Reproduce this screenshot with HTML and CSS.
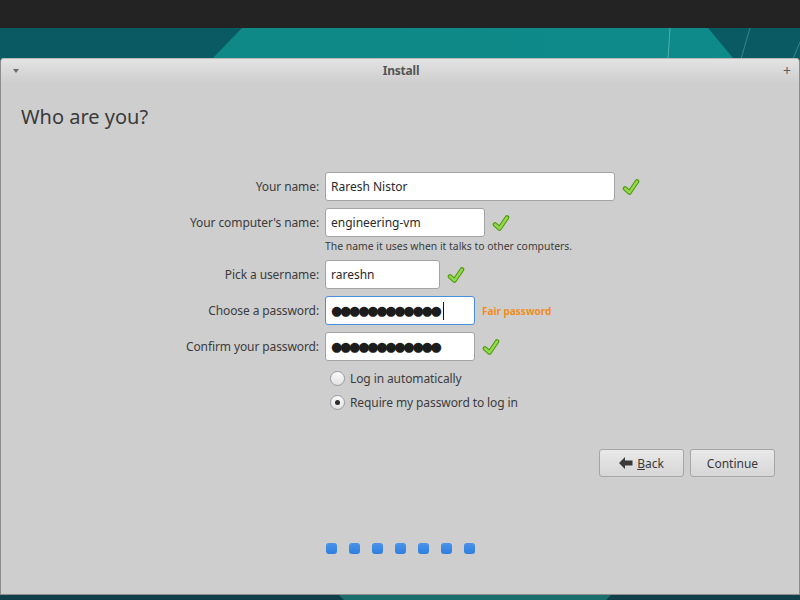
FILE: index.html
```html
<!DOCTYPE html>
<html>
<head>
<meta charset="utf-8">
<link rel="stylesheet" href="styles.css">
</head>
<body>
<div class="topbar"></div>
<div class="desktop">
  <svg class="wallpaper" width="800" height="572" viewBox="0 0 800 572">
    <rect x="0" y="0" width="800" height="572" fill="#0a5a64"/>
    <defs>
      <linearGradient id="mid" x1="0" y1="0" x2="1" y2="0">
        <stop offset="0" stop-color="#0f8987"/>
        <stop offset="1" stop-color="#0e8a8b"/>
      </linearGradient>
    </defs>
    <polygon points="242,0 708,0 733,30 213,30" fill="url(#mid)"/>
    <line x1="670" y1="0" x2="668" y2="31" stroke="#6fbcbc" stroke-width="1" opacity="0.7"/>
    <line x1="750" y1="0" x2="741" y2="31" stroke="#3f9ca0" stroke-width="1" opacity="0.7"/>
    <line x1="800" y1="14" x2="793" y2="31" stroke="#3f9ca0" stroke-width="1" opacity="0.7"/>
    <rect x="0" y="566" width="800" height="6" fill="#113f48"/>
    <polygon points="338,566 612,566 606,572 344,572" fill="#1a6e6b"/>
  </svg>
  <div class="window">
    <div class="titlebar">
      <span class="tb-menu"></span>
      <span class="tb-title">Install</span>
      <span class="tb-max">+</span>
    </div>
    <div class="content">
      <h1 class="heading">Who are you?</h1>
      <div class="form">
        <div class="label">Your name:</div>
        <div class="field">
          <div class="entry w-name">Raresh Nistor</div>
          <svg class="check" width="18" height="18" viewBox="0 0 18 18"><path d="M3 10.5 L7.5 14.5 L15 3.5" fill="none" stroke="#4f9a0a" stroke-width="4.6" stroke-linejoin="round" stroke-linecap="round"/><path d="M3 10.5 L7.5 14.5 L15 3.5" fill="none" stroke="#92d84e" stroke-width="2.4" stroke-linejoin="round" stroke-linecap="round"/></svg>
        </div>

        <div class="label">Your computer's name:</div>
        <div class="field">
          <div class="entry w-comp">engineering-vm</div>
          <svg class="check" width="18" height="18" viewBox="0 0 18 18"><path d="M3 10.5 L7.5 14.5 L15 3.5" fill="none" stroke="#4f9a0a" stroke-width="4.6" stroke-linejoin="round" stroke-linecap="round"/><path d="M3 10.5 L7.5 14.5 L15 3.5" fill="none" stroke="#92d84e" stroke-width="2.4" stroke-linejoin="round" stroke-linecap="round"/></svg>
        </div>

        <div class="label"></div>
        <div class="hint">The name it uses when it talks to other computers.</div>

        <div class="label">Pick a username:</div>
        <div class="field">
          <div class="entry w-user">rareshn</div>
          <svg class="check" width="18" height="18" viewBox="0 0 18 18"><path d="M3 10.5 L7.5 14.5 L15 3.5" fill="none" stroke="#4f9a0a" stroke-width="4.6" stroke-linejoin="round" stroke-linecap="round"/><path d="M3 10.5 L7.5 14.5 L15 3.5" fill="none" stroke="#92d84e" stroke-width="2.4" stroke-linejoin="round" stroke-linecap="round"/></svg>
        </div>

        <div class="label">Choose a password:</div>
        <div class="field">
          <div class="entry w-pass focused"><span class="secret">●●●●●●●●●●●●</span><span class="caret"></span></div>
          <span class="strength">Fair password</span>
        </div>

        <div class="label">Confirm your password:</div>
        <div class="field">
          <div class="entry w-pass"><span class="secret">●●●●●●●●●●●●</span></div>
          <svg class="check" width="18" height="18" viewBox="0 0 18 18"><path d="M3 10.5 L7.5 14.5 L15 3.5" fill="none" stroke="#4f9a0a" stroke-width="4.6" stroke-linejoin="round" stroke-linecap="round"/><path d="M3 10.5 L7.5 14.5 L15 3.5" fill="none" stroke="#92d84e" stroke-width="2.4" stroke-linejoin="round" stroke-linecap="round"/></svg>
        </div>

        <div class="label"></div>
        <div class="radios">
          <div class="radio-row"><span class="radio"></span><span>Log in automatically</span></div>
          <div class="radio-row"><span class="radio checked"></span><span>Require my password to log in</span></div>
        </div>
      </div>

      <div class="buttons">
        <div class="button">
          <svg class="back-icon" width="14" height="12" viewBox="0 0 14 12"><path d="M0 6 L6 0 L6 3.5 L13.5 3.5 L13.5 8.5 L6 8.5 L6 12 Z" fill="#3a3a3a"/></svg>
          <span><u>B</u>ack</span>
        </div>
        <div class="button">Continue</div>
      </div>

      <div class="dots">
        <span class="dot"></span><span class="dot"></span><span class="dot"></span><span class="dot"></span><span class="dot"></span><span class="dot"></span><span class="dot"></span>
      </div>
    </div>
  </div>
</div>
</body>
</html>
```

FILE: styles.css
```css
* { box-sizing: border-box; }
html, body {
  margin: 0;
  padding: 0;
  width: 800px;
  height: 600px;
  overflow: hidden;
  font-family: "Noto Sans", "DejaVu Sans", sans-serif;
  background: #232323;
}
.topbar {
  height: 28px;
  background: #232323;
}
.desktop {
  position: relative;
  height: 572px;
  overflow: hidden;
}
.wallpaper {
  position: absolute;
  left: 0;
  top: 0;
}
.window {
  position: relative;
  margin-top: 30px;
  height: 537px;
  background: #cecece;
  border: 1px solid #8c8c8c;
  border-top-color: #b8b8b8;
  border-radius: 4px 4px 0 0;
  display: flex;
  flex-direction: column;
}
.titlebar {
  height: 23px;
  display: flex;
  align-items: center;
  justify-content: space-between;
  padding: 0 8px 0 12px;
  background: linear-gradient(#e3e3e3, #cfcfcf);
  border-radius: 3px 3px 0 0;
}
.tb-menu {
  width: 0;
  height: 0;
  border-left: 3px solid transparent;
  border-right: 3px solid transparent;
  border-top: 4px solid #6a6a6a;
  margin-top: 1px;
}
.tb-title {
  font-size: 12px;
  font-weight: bold;
  color: #555555;
  letter-spacing: -0.2px;
}
.tb-max {
  font-size: 14px;
  color: #5e5e5e;
  line-height: 1;
}
.content {
  display: flex;
  flex-direction: column;
}
.heading {
  margin: 21px 0 0 20px;
  font-size: 20px;
  font-weight: normal;
  line-height: 28px;
  color: #3a3a3a;
}
.form {
  margin-top: 41px;
  display: grid;
  grid-template-columns: 318px auto;
  column-gap: 6px;
  row-gap: 7px;
  font-size: 12px;
  color: #3c3c3c;
}
.label {
  text-align: right;
  align-self: center;
  line-height: 16px;
  letter-spacing: -0.1px;
}
.field {
  display: flex;
  align-items: center;
  gap: 7px;
}
.entry {
  height: 29px;
  background: #ffffff;
  border: 1px solid #a3a3a3;
  border-radius: 3px;
  padding: 0 5px;
  display: flex;
  align-items: center;
  overflow: hidden;
  white-space: nowrap;
  font-size: 12px;
  color: #2a2a2a;
}
.entry.focused {
  border-color: #4a90d9;
}
.w-name { width: 290px; }
.w-comp { width: 160px; }
.w-user { width: 115px; }
.w-pass { width: 150px; }
.check { flex: none; }
.secret {
  font-family: "DejaVu Sans", sans-serif;
  font-size: 13px;
  color: #1c1c1c;
  letter-spacing: -2.3px;
}
.caret {
  width: 1px;
  height: 18px;
  background: #111;
  margin-left: 3px;
  flex: none;
}
.strength {
  font-size: 10px;
  font-weight: bold;
  color: #f28c1b;
}
.hint {
  font-size: 10.4px;
  line-height: 13px;
  margin-top: -4px;
  height: 13px;
  color: #3c3c3c;
  white-space: nowrap;
}
.radios {
  margin-top: -2px;
  display: flex;
  flex-direction: column;
  letter-spacing: -0.1px;
}
.radio-row {
  height: 24px;
  display: flex;
  align-items: center;
  gap: 5px;
  padding-left: 5px;
}
.radio {
  width: 15px;
  height: 15px;
  border-radius: 50%;
  border: 1px solid #9b9b9b;
  background: linear-gradient(#fbfbfb, #e2e2e2);
  display: flex;
  align-items: center;
  justify-content: center;
}
.radio.checked::after {
  content: "";
  width: 5px;
  height: 5px;
  border-radius: 50%;
  background: #2d2d2d;
}
.buttons {
  margin-top: 35px;
  display: flex;
  justify-content: flex-end;
  gap: 6px;
  padding-right: 24px;
}
.button {
  width: 85px;
  height: 28px;
  border: 1px solid #a6a6a6;
  border-radius: 3px;
  background: linear-gradient(#e9e9e9, #d6d6d6);
  display: flex;
  align-items: center;
  justify-content: center;
  gap: 4px;
  font-size: 12px;
  color: #3a3a3a;
}
.back-icon { flex: none; }
.dots {
  margin-top: 66px;
  display: flex;
  justify-content: center;
  gap: 12px;
}
.dot {
  width: 11px;
  height: 11px;
  border-radius: 3px;
  background: linear-gradient(#4a93ea, #2f7fdf);
}
```
